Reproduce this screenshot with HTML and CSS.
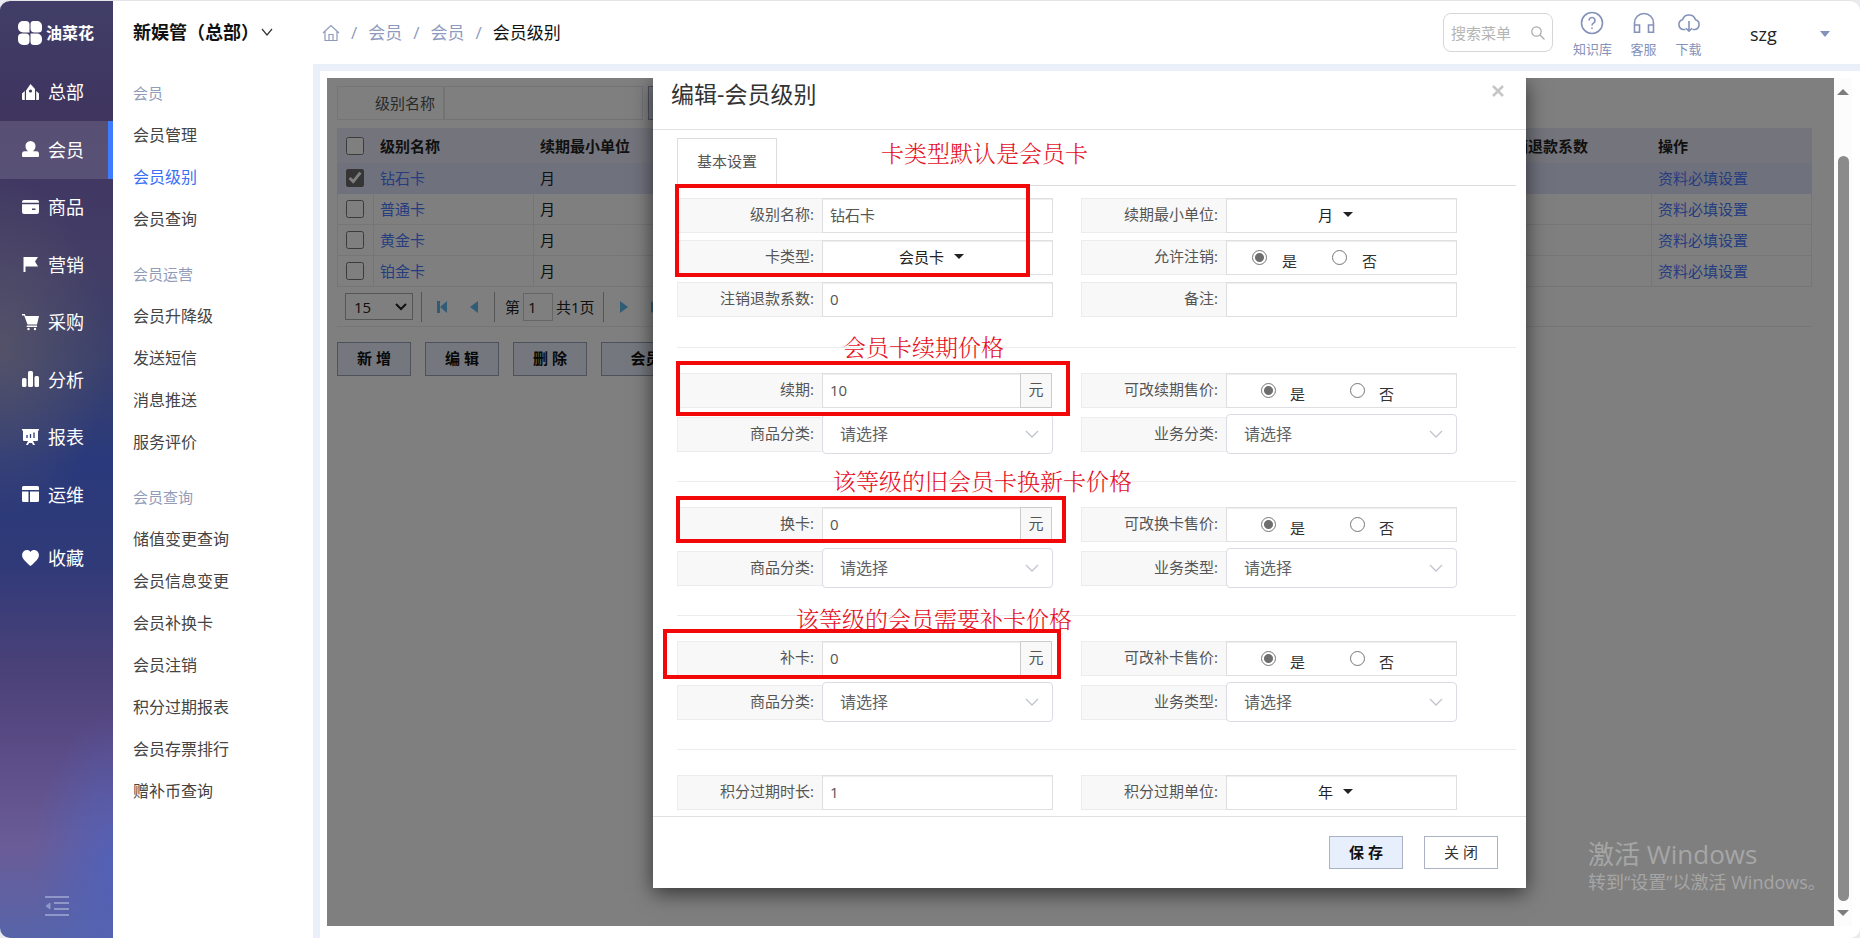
FILE: index.html
```html
<!DOCTYPE html>
<html lang="zh-CN">
<head>
<meta charset="utf-8">
<title>会员级别</title>
<link rel="stylesheet" href="styles.css">
</head>
<body>
<div class="app">
  <nav class="sidebar">
    <div class="logo">
      <svg width="24" height="24" viewBox="0 0 24 24" fill="#fff"><path d="M5 0h3a3.500 3.500 0 0 1 3.500 3.500v8H5a5 5 0 0 1-5-5V5a5 5 0 0 1 5-5z"/><path d="M15.500 0H19a5 5 0 0 1 5 5v3a3.500 3.500 0 0 1-3.500 3.500h-4a4 4 0 0 1-4-4V3a3 3 0 0 1 3-3z"/><path d="M4 12.500h4a3.500 3.500 0 0 1 3.500 3.500v4a4 4 0 0 1-4 4H5a5 5 0 0 1-5-5v-2.500a4 4 0 0 1 4-4z"/><path d="M12.500 12.500H19a5 5 0 0 1 5 5V19a5 5 0 0 1-5 5h-3a3.500 3.500 0 0 1-3.500-3.500z"/></svg>
      <span>油菜花</span>
    </div>
    <a class="nav-item" href="#"><svg viewBox="0 0 17 17"><path d="M4 6.500 8.500 0 13 5v11H4z"/><path d="M0 9.500 2.800 7v9H1a1 1 0 0 1-1-1zM17 9.500 14.200 7v9H16a1 1 0 0 0 1-1z"/><circle cx="8.500" cy="7" r="1.600" fill="#3f3a64"/></svg>总部</a>
    <a class="nav-item active" href="#"><svg viewBox="0 0 17 17"><path d="M8.500 0a5 5 0 0 1 5 5.200c0 2.200-1.200 4-2.500 5h3.500A2.500 2.500 0 0 1 17 12.800V15a1 1 0 0 1-1 1H1a1 1 0 0 1-1-1v-2.200a2.500 2.500 0 0 1 2.500-2.600H6c-1.300-1-2.500-2.800-2.500-5A5 5 0 0 1 8.500 0z"/></svg>会员</a>
    <a class="nav-item" href="#"><svg viewBox="0 0 17 17"><path d="M2 1h13a2 2 0 0 1 2 2v.8H0V3a2 2 0 0 1 2-2zM0 5.300h17V13a2 2 0 0 1-2 2H2a2 2 0 0 1-2-2z"/><path d="M10 10.200h3.500" stroke="#474365" stroke-width="1.500"/></svg>商品</a>
    <a class="nav-item" href="#"><svg viewBox="0 0 17 17"><path d="M1.500 1H16l-3 4.500 3 5H3.500V16h-2z"/></svg>营销</a>
    <a class="nav-item" href="#"><svg viewBox="0 0 17 17"><path d="M0 0h2.800l.8 2H17l-2 8.500H5.500L2.200 1.500H0z"/><path d="M5 11.500h10V13H4.500z"/><circle cx="6.500" cy="15" r="1.200"/><circle cx="13" cy="15" r="1.200"/></svg>采购</a>
    <a class="nav-item" href="#"><svg viewBox="0 0 17 17"><rect y="7" width="4.500" height="9" rx="1.500"/><rect x="6" width="5" height="16" rx="1.500"/><rect x="12.500" y="5" width="4.500" height="11" rx="1.500"/></svg>分析</a>
    <a class="nav-item" href="#"><svg viewBox="0 0 17 17"><path d="M0 0h17v1.500h-1V11a1 1 0 0 1-1 1h-4l2 4h-2l-1-2H7l-1 2H4l2-4H2a1 1 0 0 1-1-1V1.500H0z"/><path d="M5 6v3M8.500 5v4M12 3.500V9" stroke="#303b73" stroke-width="1.300"/></svg>报表</a>
    <a class="nav-item" href="#"><svg viewBox="0 0 17 17"><path d="M1.500 0h14A1.500 1.500 0 0 1 17 1.500V4H0V1.500A1.500 1.500 0 0 1 1.500 0zM0 5.500h6.500V16h-5A1.500 1.500 0 0 1 0 14.500zM8 5.500h9v9a1.500 1.500 0 0 1-1.500 1.500H8z"/></svg>运维</a>
    <a class="nav-item favorite" href="#"><svg viewBox="0 0 17 17"><path d="M8.500 2C10-.4 13-.5 15 1c2.400 2 2.500 5.500.6 8C14 11.300 11 14 8.500 16 6 14 3 11.300 1.400 9-.5 6.500-.4 3 2 1c2-1.500 5-1.400 6.500 1z"/></svg>收藏</a>
    <button class="collapse" aria-label="收起菜单"><svg width="24" height="20" viewBox="0 0 24 20" stroke="currentColor" stroke-width="2" fill="currentColor"><path d="M0 1h24M9 7h15M9 13h15M0 19h24"/><path d="M5 7v6L1 10z" stroke-width="1"/></svg></button>
  </nav>

  <aside class="submenu">
    <button class="store">新娱管（总部）<svg width="12" height="8" viewBox="0 0 12 8" fill="none" stroke="#333" stroke-width="1.200"><path d="m1 1 5 6 5-6"/></svg></button>
    <h2>会员</h2>
    <a href="#">会员管理</a><a href="#" class="current">会员级别</a><a href="#">会员查询</a>
    <h2 class="next">会员运营</h2>
    <a href="#">会员升降级</a><a href="#">发送短信</a><a href="#">消息推送</a><a href="#">服务评价</a>
    <h2 class="next">会员查询</h2>
    <a href="#">储值变更查询</a><a href="#">会员信息变更</a><a href="#">会员补换卡</a><a href="#">会员注销</a><a href="#">积分过期报表</a><a href="#">会员存票排行</a><a href="#">赠补币查询</a>
  </aside>

  <main class="main">
    <header class="topbar">
      <div class="crumbs">
        <a href="#" aria-label="首页"><svg width="18" height="18" viewBox="0 0 18 18" fill="none" stroke="currentColor" stroke-width="1.200"><path d="M1 9 9 1.500 17 9M3 7.500V16.500h12v-9M7 16v-5.500h4V16"/></svg></a>
        <span>/</span><a href="#">会员</a><span>/</span><a href="#">会员</a><span>/</span><b>会员级别</b>
      </div>
      <div class="tools">
        <div class="search"><input type="text" placeholder="搜索菜单" aria-label="搜索菜单"><svg width="14" height="14" viewBox="0 0 14 14" fill="none" stroke="#aaa" stroke-width="1.200"><circle cx="5.500" cy="5.500" r="4.700"/><path d="m9 9 4.500 4.500"/></svg></div>
        <a class="tool" href="#"><svg viewBox="0 0 24 24"><circle cx="12" cy="12" r="10.500"/><path d="M9 9.500a3 3 0 1 1 4.500 2.600c-1 .6-1.500 1-1.500 2.400M12 16.500V18"/></svg>知识库</a>
        <a class="tool" href="#"><svg viewBox="0 0 24 24"><path d="M2.500 21V12a9.500 9.500 0 0 1 19 0v9M2.500 14H7.500v7.200h-5zM16.500 14h5v7.200h-5z"/></svg>客服</a>
        <a class="tool" href="#"><svg viewBox="0 0 24 24"><path d="M8.500 18.500H6A5 5 0 0 1 5.500 8.800a6.800 6.800 0 0 1 13 0A5 5 0 0 1 18 18.500h-2.500M12 10v10M9 17.200l3 3 3-3"/></svg>下载</a>
        <button class="user">szg<i class="tri"></i></button>
      </div>
    </header>

    <div class="content">
      <div class="frame">
        <div class="filter">
          <label for="q">级别名称</label><input id="q" type="text"><button class="btn" aria-label="查询"></button>
        </div>
        <table class="grid">
          <colgroup><col class="c-check"><col class="c-std"><col><col class="c-std"><col class="c-std"></colgroup>
          <thead><tr><th><input type="checkbox" aria-label="全选"></th><th>级别名称</th><th>续期最小单位</th><th>注销退款系数</th><th>操作</th></tr></thead>
          <tbody>
            <tr class="selected"><td><input type="checkbox" aria-label="钻石卡" checked></td><td><a href="#">钻石卡</a></td><td>月</td><td></td><td><a href="#">资料必填设置</a></td></tr>
            <tr><td><input type="checkbox" aria-label="普通卡"></td><td><a href="#">普通卡</a></td><td>月</td><td></td><td><a href="#">资料必填设置</a></td></tr>
            <tr><td><input type="checkbox" aria-label="黄金卡"></td><td><a href="#">黄金卡</a></td><td>月</td><td></td><td><a href="#">资料必填设置</a></td></tr>
            <tr><td><input type="checkbox" aria-label="铂金卡"></td><td><a href="#">铂金卡</a></td><td>月</td><td></td><td><a href="#">资料必填设置</a></td></tr>
          </tbody>
        </table>
        <div class="pager">
          <div class="size"><select aria-label="每页条数"><option>15</option></select><svg width="12" height="8" viewBox="0 0 12 8" fill="none" stroke="#222" stroke-width="2"><path d="m1 1 5 5 5-5"/></svg></div>
          <i class="sep first"></i>
          <button aria-label="首页"><svg width="12" height="14" viewBox="0 0 12 14"><path d="M1 1h3v12H1zM11 1v12L4 7z"/></svg></button>
          <button aria-label="上一页"><svg width="12" height="14" viewBox="0 0 12 14"><path d="M10 1v12L2 7z"/></svg></button>
          <i class="sep"></i>
          <label for="pg">第</label><input id="pg" type="text" value="1"><span>共1页</span>
          <i class="sep"></i>
          <button aria-label="下一页"><svg width="12" height="14" viewBox="0 0 12 14"><path d="M2 1v12l8-6z"/></svg></button>
          <button aria-label="末页"><svg width="12" height="14" viewBox="0 0 12 14"><path d="M1 1v12l7-6zM8 1h3v12H8z"/></svg></button>
        </div>
        <div class="actions">
          <button class="btn">新 增</button><button class="btn">编 辑</button><button class="btn">删 除</button><button class="btn wide">会员卡</button>
        </div>

        <div class="overlay">
          <section class="modal" role="dialog" aria-labelledby="dlg-title">
            <div class="modal-head"><h1 id="dlg-title">编辑-会员级别</h1><button class="close" aria-label="关闭窗口"><svg width="12" height="12" viewBox="0 0 12 12" stroke="#c6c6c6" stroke-width="2.500"><path d="m1 1 10 10M11 1 1 11"/></svg></button></div>
            <form class="modal-body">
              <div class="tabs"><button type="button" class="tab">基本设置</button></div>
              <div class="rows first">
                <div class="field"><label for="f1">级别名称:</label><input id="f1" class="box" type="text" value="钻石卡"></div>
                <div class="field"><label for="f2">续期最小单位:</label><div class="box pick"><select id="f2"><option>月</option></select></div></div>
                <div class="field"><label for="f3">卡类型:</label><div class="box pick"><select id="f3"><option>会员卡</option></select></div></div>
                <div class="field"><span class="lab">允许注销:</span><div class="box radios near"><label><input type="radio" name="a" checked><span>是</span></label><label><input type="radio" name="a"><span>否</span></label></div></div>
                <div class="field"><label for="f4">注销退款系数:</label><input id="f4" class="box" type="text" value="0"></div>
                <div class="field"><label for="f5">备注:</label><input id="f5" class="box" type="text"></div>
              </div>
              <div class="rows part">
                <div class="field"><label for="g1">续期:</label><input id="g1" class="box" type="text" value="10"><span class="unit">元</span></div>
                <div class="field"><span class="lab">可改续期售价:</span><div class="box radios"><label><input type="radio" name="b" checked><span>是</span></label><label><input type="radio" name="b"><span>否</span></label></div></div>
                <div class="field tall"><label for="g2">商品分类:</label><div class="combo"><select id="g2"><option>请选择</option></select><svg viewBox="0 0 14 8"><path d="m1 1 6 6 6-6"/></svg></div></div>
                <div class="field tall"><label for="g3">业务分类:</label><div class="combo"><select id="g3"><option>请选择</option></select><svg viewBox="0 0 14 8"><path d="m1 1 6 6 6-6"/></svg></div></div>
              </div>
              <div class="rows part">
                <div class="field"><label for="h1">换卡:</label><input id="h1" class="box" type="text" value="0"><span class="unit">元</span></div>
                <div class="field"><span class="lab">可改换卡售价:</span><div class="box radios"><label><input type="radio" name="c" checked><span>是</span></label><label><input type="radio" name="c"><span>否</span></label></div></div>
                <div class="field tall"><label for="h2">商品分类:</label><div class="combo"><select id="h2"><option>请选择</option></select><svg viewBox="0 0 14 8"><path d="m1 1 6 6 6-6"/></svg></div></div>
                <div class="field tall"><label for="h3">业务类型:</label><div class="combo"><select id="h3"><option>请选择</option></select><svg viewBox="0 0 14 8"><path d="m1 1 6 6 6-6"/></svg></div></div>
              </div>
              <div class="rows part">
                <div class="field"><label for="i1">补卡:</label><input id="i1" class="box" type="text" value="0"><span class="unit">元</span></div>
                <div class="field"><span class="lab">可改补卡售价:</span><div class="box radios"><label><input type="radio" name="d" checked><span>是</span></label><label><input type="radio" name="d"><span>否</span></label></div></div>
                <div class="field tall"><label for="i2">商品分类:</label><div class="combo"><select id="i2"><option>请选择</option></select><svg viewBox="0 0 14 8"><path d="m1 1 6 6 6-6"/></svg></div></div>
                <div class="field tall"><label for="i3">业务类型:</label><div class="combo"><select id="i3"><option>请选择</option></select><svg viewBox="0 0 14 8"><path d="m1 1 6 6 6-6"/></svg></div></div>
              </div>
              <div class="rows part last">
                <div class="field"><label for="j1">积分过期时长:</label><input id="j1" class="box" type="text" value="1"></div>
                <div class="field"><label for="j2">积分过期单位:</label><div class="box pick"><select id="j2"><option>年</option></select></div></div>
              </div>
            </form>
            <div class="modal-foot"><button class="btn primary">保 存</button><button class="btn plain">关 闭</button></div>

            <div class="mark mark-1"></div><div class="mark mark-2"></div><div class="mark mark-3"></div><div class="mark mark-4"></div>
            <p class="note note-1">卡类型默认是会员卡</p>
            <p class="note note-2">会员卡续期价格</p>
            <p class="note note-3">该等级的旧会员卡换新卡价格</p>
            <p class="note note-4">该等级的会员需要补卡价格</p>
          </section>
        </div>
      </div>
      <div class="scroll"><i class="up"></i><i class="thumb"></i><i class="down"></i></div>
    </div>
  </main>
  <div class="watermark"><p class="big">激活 Windows</p><p>转到“设置”以激活 Windows。</p></div>
</div>
</body>
</html>
```
FILE: styles.css
```css
* { box-sizing: border-box; }
body, h1, h2, p { margin: 0; }
body { background: #e9ebf0; color: #333; font: 15px/20px "Open Sans", "Noto Sans CJK SC", sans-serif; }
a { color: inherit; text-decoration: none; }
button, input, select { font: inherit; color: inherit; margin: 0; padding: 0; border: 0; border-radius: 0; background: none; outline: 0; }
select { appearance: none; }
svg { flex: none; }

.app { position: relative; display: flex; height: 100vh; border-top: 1px solid #e4e4e6; border-radius: 10px; overflow: hidden; background: #fff; }

/* primary navigation */
.sidebar {
  display: flex; flex-direction: column; flex: none; width: 113px; color: #fff;
  background:
    radial-gradient(ellipse 110px 170px at 0 37%, rgba(92, 88, 104, .75), transparent),
    radial-gradient(ellipse 80px 150px at 100% 92%, rgba(78, 98, 190, .8), transparent),
    linear-gradient(#403e68 0, #3f355f 12%, #423c66 27%, #3b416c 38%, #29397b 49%, #303a78 60%, #4a4178 71%, #5b4b86 80%, #6a5c97 90%, #5764a9 100%);
}
.logo { display: flex; align-items: center; gap: 4px; height: 63px; padding: 0 0 0 18px; font-size: 16px; font-weight: 700; }
.nav-item { display: flex; align-items: center; gap: 9px; height: 58px; padding-left: 22px; padding-bottom: 1px; font-size: 18px; line-height: 26px; }
.nav-item:nth-of-type(odd) { height: 57px; }
.nav-item svg { width: 17px; height: 17px; fill: #fff; }
.nav-item.active { background: rgba(255, 255, 255, .13); border-right: 5px solid #3f7bff; }
.nav-item.favorite { margin-top: 6px; }
.collapse { margin: auto auto 22px 45px; height: 20px; color: #8e97c8; }
.collapse svg { display: block; }

/* secondary navigation */
.submenu { flex: none; width: 200px; padding-left: 20px; font-size: 16px; color: #444; }
.store { display: flex; align-items: center; gap: 2px; height: 62px; margin-bottom: 9px; font-size: 18px; font-weight: 700; color: #111; white-space: nowrap; }
.submenu h2 { height: 42px; font-size: 15px; font-weight: 400; line-height: 42px; color: #929cb8; }
.submenu h2.next { margin-top: 13px; }
.submenu a { display: block; height: 42px; line-height: 42px; }
.submenu a.current { color: #3b6ff5; }

/* header */
.main { display: flex; flex-direction: column; flex: 1; min-width: 0; }
.topbar { display: flex; justify-content: space-between; align-items: flex-start; flex: none; height: 63px; padding: 0 30px 0 9px; }
.crumbs { display: flex; align-items: center; gap: 11px; height: 63px; font-size: 17px; color: #8f9bbd; }
.crumbs b { font-weight: 400; color: #111; }
.crumbs svg { display: block; }
.tools { display: flex; align-items: flex-start; color: #8592b9; }
.search { display: flex; align-items: center; width: 110px; height: 39px; margin: 12px 20px 0 0; padding: 0 7px; border: 1px solid #d6d6d9; border-radius: 8px; }
.search input { flex: 1; min-width: 0; }
.search ::placeholder { color: #b5b5b5; }
.tool { display: flex; flex-direction: column; align-items: center; gap: 4px; min-width: 39px; padding-top: 10px; margin-right: 6px; font-size: 13px; }
.tool + .tool { margin-left: 6px; margin-right: 0; }
.tool svg { width: 24px; height: 24px; fill: none; stroke: currentColor; stroke-width: 1.6; }
.user { display: flex; align-items: center; justify-content: space-between; width: 80px; height: 66px; margin-left: 42px; font-size: 18px; color: #222; }
.tri { border: 5px solid transparent; border-top: 6px solid #8592b9; border-bottom: 0; }

/* page area */
.content { display: flex; flex: 1; min-height: 0; padding: 7px 8px 12px 7px; border: solid #ebeff9; border-width: 7px 0 0 7px; }
.frame { position: relative; flex: 1; min-width: 0; overflow: hidden; padding: 8px 22px 0 10px; color: #222; }
.filter { display: flex; height: 34px; margin-bottom: 8px; }
.filter label { width: 107px; padding-right: 8px; text-align: right; line-height: 32px; border: 1px solid #eaeaea; color: #555; }
.filter input { width: 199px; margin-right: 5px; border: 1px solid #e4e4e4; }
.btn { width: 74px; height: 34px; padding-bottom: 2px; border: 1px solid #9aa3b8; background: #e8effc; font-weight: 700; color: #111; }
.btn.wide { width: 104px; }
.grid { width: 100%; border-collapse: collapse; table-layout: fixed; }
.c-check { width: 36px; }
.c-std { width: 160px; }
.grid th, .grid td { height: 31px; padding: 0 6px; text-align: left; border: 1px solid #ececef; }
.grid th { height: 34px; background: #e8ebf8; border-color: #e8ebf8; }
.grid .selected td { background: #dfe2fa; border-color: #dfe2fa; }
.grid th:first-child, .grid td:first-child { padding: 0 0 0 8px; }
.grid a { color: #4a7bff; }
.grid input { display: block; width: 18px; height: 18px; accent-color: #6b6b6b; }
.pager { display: flex; align-items: center; height: 40px; padding-left: 8px; border-bottom: 1px solid #ececef; }
.size { display: flex; align-items: center; width: 68px; height: 27px; padding: 0 5px 0 8px; border: 1px solid #aaa; }
.size select { flex: 1; }
.sep { width: 1px; height: 30px; margin: 0 4px; background: #aaa; }
.sep.first { margin-left: 8px; }
.pager button { display: flex; width: 32px; height: 20px; align-items: center; justify-content: center; }
.pager svg path { fill: #62b8ec; }
.pager .size svg path { fill: none; }
.pager label { margin: 0 3px 0 6px; }
.pager input { width: 30px; height: 28px; margin-right: 3px; padding-left: 4px; border: 1px solid #ccc; }
.pager span { margin-right: 4px; }
.actions { display: flex; gap: 14px; margin-top: 15px; }

/* dialog */
.overlay { position: absolute; inset: 0; display: flex; justify-content: center; align-items: flex-start; padding-left: 18px; background: rgba(0, 0, 0, .5); }
.modal { position: relative; width: 873px; background: #fff; color: #555; box-shadow: 0 5px 20px rgba(0, 0, 0, .6); }
.modal-head { display: flex; justify-content: space-between; align-items: flex-start; height: 52px; padding: 4px 22px 0 18px; border-bottom: 1px solid #e2e2e5; }
.modal-head h1 { font-size: 23px; font-weight: 400; line-height: 24px; color: #333; }
.close { padding-top: 3px; }
.close svg { display: block; }
.modal-body { padding: 8px 10px 6px 24px; }
.tabs { display: flex; height: 48px; border-bottom: 1px solid #ddd; }
.tab { width: 100px; padding-bottom: 2px; border: 1px solid #ddd; border-bottom: 0; }
.rows { display: grid; grid-template-columns: repeat(2, minmax(0, 1fr)); gap: 7px 28px; padding-right: 59px; }
.rows.first { padding-top: 12px; padding-bottom: 30px; }
.rows.part { row-gap: 6px; padding-top: 26px; padding-bottom: 27px; background: linear-gradient(#ececee, #ececee) top / 100% 1px no-repeat; }
.rows.last { padding-bottom: 0; }
.field { display: flex; height: 35px; }
.field > label, .lab { flex: none; width: 146px; height: 35px; padding-right: 8px; border: 1px solid #ececee; background: #f8f8f8; text-align: right; line-height: 31px; }
.box { flex: 1; min-width: 0; margin-left: -1px; border: 1px solid #dfdfe2; background: #fff; box-shadow: inset 0 1px 1px rgba(0, 0, 0, .07); }
input.box { padding: 0 0 1px 7px; }
.unit { flex: none; width: 32px; margin: 0 1px 0 -1px; border: 1px solid #ccc; background: #f8f8f8; text-align: center; line-height: 31px; }
.pick { display: flex; align-items: center; justify-content: center; gap: 9px; padding-right: 12px; padding-bottom: 2px; color: #222; }
.pick::after { content: ""; border: 5px solid transparent; border-top-color: #222; border-bottom: 0; }
.radios { display: flex; gap: 45px; padding-left: 34px; color: #333; }
.radios.near { gap: 35px; padding-left: 25px; }
.radios label { display: flex; align-items: center; gap: 14px; }
.radios.near label { gap: 15px; }
.radios span { padding-top: 6px; }
.radios input { appearance: none; width: 15px; height: 15px; border: 1px solid #767676; border-radius: 50%; }
.radios input:checked { background: radial-gradient(circle, #6e6e6e 4px, transparent 5px); }
.field.tall { height: 40px; }
.tall > label { margin-top: 3px; }
.combo { display: flex; align-items: center; flex: 1; min-width: 0; margin-left: -1px; padding: 0 13px 0 17px; border: 1px solid #d9dce3; border-radius: 4px; background: #fff; font-size: 16px; color: #606266; }
.combo select { flex: 1; min-width: 0; }
.combo svg { width: 14px; height: 8px; fill: none; stroke: #c0c4cc; stroke-width: 1.3; }
.modal-foot { display: flex; justify-content: flex-end; gap: 21px; height: 72px; padding: 19px 28px; border-top: 1px solid #e2e2e5; }
.modal-foot .btn { height: 33px; border-color: #aab2c4; }
.btn.plain { background: #fff; font-weight: 400; color: #333; }

/* callouts drawn over the form */
.mark { position: absolute; border: 4px solid #f20808; pointer-events: none; }
.mark-1 { left: 22px; top: 106px; width: 355px; height: 93px; }
.mark-2 { left: 23px; top: 283px; width: 394px; height: 55px; }
.mark-3 { left: 23px; top: 418px; width: 390px; height: 47px; }
.mark-4 { left: 10px; top: 551px; width: 398px; height: 50px; }
.note { position: absolute; font: 300 23px/28px "Noto Serif CJK SC", "Noto Sans CJK SC", serif; color: #e60f1e; white-space: nowrap; }
.note-1 { left: 228px; top: 61px; }
.note-2 { left: 190px; top: 255px; }
.note-3 { left: 180px; top: 389px; }
.note-4 { left: 143px; top: 527px; }

.scroll { display: flex; flex-direction: column; align-items: center; flex: none; width: 18px; padding: 11px 0 10px; background: #fcfcfc; }
.thumb { flex: 1; width: 11px; margin: 61px 0 9px; border-radius: 6px; background: #8b8b8b; }
.up { border: 6px solid transparent; border-bottom-color: #7d7d7d; border-top: 0; }
.down { border: 6px solid transparent; border-top-color: #7d7d7d; border-bottom: 0; }

.watermark { position: absolute; right: 36px; bottom: 44px; width: 236px; font-size: 18px; line-height: 24px; color: #a6a6a6; white-space: nowrap; pointer-events: none; }
.watermark .big { font-size: 26px; line-height: 32px; }
```
